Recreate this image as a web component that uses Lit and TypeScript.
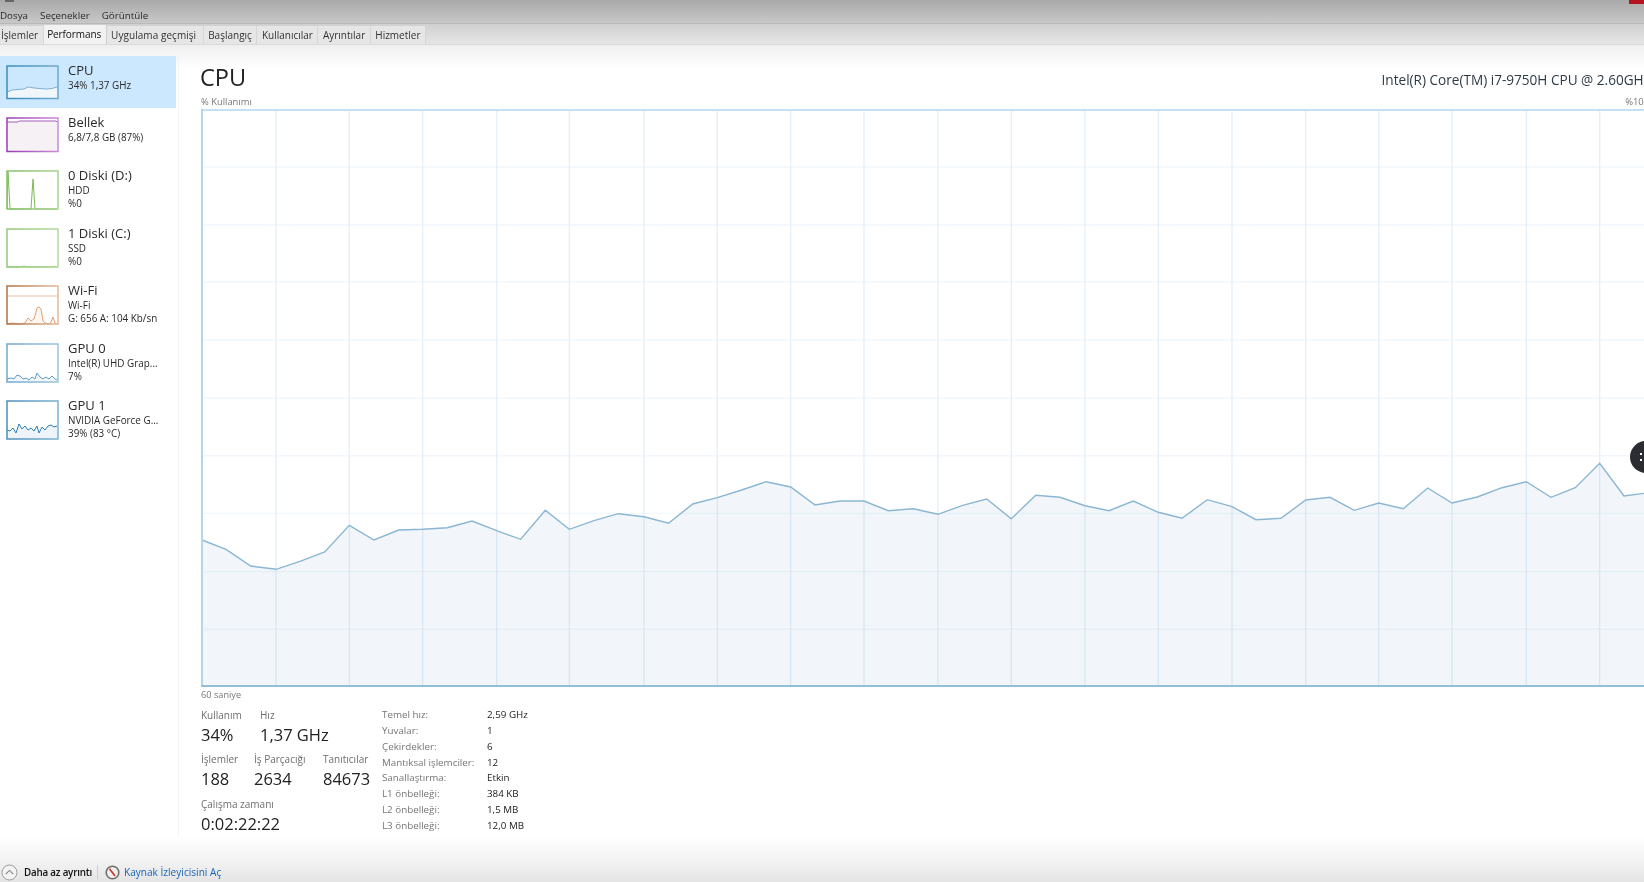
import { LitElement, html, css, svg } from "lit";
import { customElement } from "lit/decorators.js";

const CHART = "202,540 226,549.3 250.7,566 276,569.3 300,561.3 324.7,552 349.3,525.3 374,540 398.7,530 422.7,529.3 447.3,527.7 472,521 496.7,530.7 520.7,539.3 545.3,510.3 569.3,529.3 594,520.7 618.3,513.7 644,516.7 668.5,523.3 692.7,504 717.3,497.7 741.7,490 766,481.7 790.7,487 815,505 840,501 864,501 888.3,510.7 913.3,508.7 938,514.3 962.7,505.3 986.7,499 1011.3,518.7 1035.7,495.3 1060,497.3 1085,505.7 1109,510.7 1133.3,501 1158.3,512.3 1182,518.3 1207.3,499.7 1232,506.7 1256,519.7 1281,518.3 1305.7,500 1330,497.3 1354.3,510.3 1378.7,503 1403.3,508.7 1427.7,488 1452,503 1477.3,497 1502,487.7 1526.3,481.7 1551,497.3 1575.3,487.7 1599.7,463.3 1624,496 1650,492.6";

const VX = [276, 349.3, 422.7, 496.7, 569.3, 644, 717.3, 790.7, 864, 938, 1011.3, 1085, 1158.3, 1232, 1305.7, 1378.7, 1452, 1526.3, 1599.7];
const HY = [167, 224.7, 282, 340, 398, 455.7, 513.4, 571.6, 629.3];

interface Thumb {
  title: string;
  lines: string[];
  color: string;
  soft: string;
  fill: string;
  line: string;
  h: number;
  pts: string;
  extra?: string;
}

const ITEMS: Thumb[] = [
  { title: "CPU", lines: ["34% 1,37 GHz"], color: "#3a8dbb", soft: "#6fa9cc", fill: "#f1f6fb", line: "#7fb0d0", h: 34.5,
    pts: "1,27 6,25 12,24.5 18,24 22,22 28,23 34,23.5 40,24 46,23.5 51,22" },
  { title: "Bellek", lines: ["6,8/7,8 GB (87%)"], color: "#9a3db5", soft: "#c98ad8", fill: "#f5f1f5", line: "#a45cbd", h: 35.5,
    pts: "1,5 12,5 13,4 50,4 51,5" },
  { title: "0 Diski (D:)", lines: ["HDD", "%0"], color: "#86c06a", soft: "#a9d38f", fill: "#ffffff", line: "#7dba58", h: 40,
    pts: "1,39 2,2 4,39 25,39 27,9 29,39 51,39" },
  { title: "1 Diski (C:)", lines: ["SSD", "%0"], color: "#93c977", soft: "#b3da9b", fill: "#ffffff", line: "#8cc56c", h: 40,
    pts: "1,39 16,39 18,38 21,39 36,39 37,38.2 39,39 47,39 48,38.2 51,39" },
  { title: "Wi-Fi", lines: ["Wi-Fi", "G: 656 A: 104 Kb/sn"], color: "#ad7145", soft: "#e4b99a", fill: "#fdf7f2", line: "#e0a27a", h: 40,
    pts: "1,39 6,38 14,39 19,38 22,33 25,36 28,34 31,23 33,22 35,24 37,36 39,38 44,39 47,32 49,38 51,39",
    extra: "1,11 51,11" },
  { title: "GPU 0", lines: ["Intel(R) UHD Grap...", "7%"], color: "#6fa9cc", soft: "#9cc4dc", fill: "#f3f7fb", line: "#5d9cc4", h: 40,
    pts: "1,36 5,35 8,36 11,32 14,33 17,36 20,35 23,37 26,34 29,36 31,30 34,34 37,36 40,34 43,36 46,33 49,36 51,37" },
  { title: "GPU 1", lines: ["NVIDIA GeForce G...", "39% (83 °C)"], color: "#4a8fba", soft: "#7cb0d0", fill: "#eef4fa", line: "#2f80b5", h: 40,
    pts: "1,30 4,31 7,28 10,33 13,24 16,29 19,26 22,30 25,28 28,31 31,26 33,33 36,27 39,30 42,26 45,25 48,27 51,26" },
];

@customElement("app-root")
export class AppRoot extends LitElement {
  static styles = css`
    :host {
      display: block;
      width: 1644px;
      height: 882px;
      overflow: hidden;
      background: #fff;
      font-family: "Open Sans", "Noto Sans", sans-serif;
      color: #222;
      position: relative;
    }
    .app {
      display: flex;
      flex-direction: column;
      height: 882px;
      filter: blur(0.45px);
    }
    .top {
      height: 23px;
      background: linear-gradient(#a9a9a9, #c8c8c8);
      border-bottom: 1px solid #b9b9b9;
      flex: none;
      overflow: hidden;
    }
    .titlebar {
      height: 7px;
      overflow: hidden;
      display: flex;
      align-items: flex-end;
      gap: 5px;
      padding-left: 5px;
      font-size: 11px;
      color: #444;
    }
    .titlebar span {
      line-height: 14px;
      margin-bottom: 5px;
      white-space: nowrap;
    }
    .titlebar i {
      width: 9px;
      height: 9px;
      background: #666;
      margin-bottom: 5px;
      flex: none;
    }
    .menu {
      display: flex;
      height: 16px;
      align-items: center;
      font-size: 9.8px;
      color: #2a2a2a;
      gap: 12px;
    }
    .tabs {
      height: 21px;
      box-sizing: border-box;
      flex: none;
      display: flex;
      align-items: flex-end;
      background: linear-gradient(#d0d0d0, #e6e6e6);
      border-bottom: 1px solid #dadada;
      font-size: 10px;
    }
    .tab {
      height: 18px;
      box-sizing: border-box;
      padding: 0 4.5px;
      display: flex;
      align-items: center;
      white-space: nowrap;
      color: #333;
      background: #e6e6e6;
      border-right: 1px solid #d6d6d6;
    }
    .tab.first {
      padding-left: 1px;
    }
    .tab.on {
      height: 20px;
      padding: 0 4.5px 2px 3.5px;
      letter-spacing: -0.1px;
      background: #f2f2f2;
      border-top: 1px solid #cfcfcf;
      border-right: 1px solid #cfcfcf;
      color: #111;
    }
    .tab.wide {
      padding-right: 6.5px;
      letter-spacing: 0.05px;
    }
    .main {
      flex: 1;
      min-height: 0;
      display: flex;
      background: linear-gradient(#efefef 0, #ffffff 24px);
    }
    .side {
      width: 178px;
      flex: none;
      box-sizing: border-box;
      padding-top: 11px;
      display: flex;
      flex-direction: column;
    }
    .item {
      height: 57.5px;
      width: 176px;
      box-sizing: border-box;
      flex: none;
      display: flex;
      align-items: flex-start;
      padding: 10px 0 0 6px;
      gap: 9px;
    }
    .item.two {
      height: 52px;
      padding-top: 9px;
    }
    .item.sel {
      background: #cce8ff;
    }
    .item svg {
      flex: none;
      display: block;
    }
    .txt {
      margin-top: -4px;
      min-width: 0;
    }
    .t1 {
      font-size: 13px;
      line-height: 18px;
      color: #2a2a2a;
      white-space: nowrap;
    }
    .t2 {
      font-size: 9.9px;
      line-height: 13px;
      color: #2a2a2a;
      white-space: nowrap;
    }
    .content {
      flex: 1;
      min-width: 0;
      overflow: hidden;
      border-left: 1px solid #f3f3f3;
      padding: 15px 0 0 21px;
    }
    .head {
      width: 1450px;
      height: 34px;
      display: flex;
      justify-content: space-between;
      align-items: center;
    }
    .head h1 {
      margin: 0;
      font-weight: 400;
      font-size: 23.5px;
      color: #222;
    }
    .head .model {
      font-size: 13.6px;
      padding-top: 5px;
      white-space: nowrap;
      color: #2d3b47;
    }
    .sub {
      width: 1448px;
      height: 14px;
      display: flex;
      justify-content: space-between;
      align-items: center;
      font-size: 9.4px;
      color: #777;
      padding-left: 1px;
    }
    .chart {
      display: block;
      margin-left: 1px;
    }
    .sixty {
      font-size: 9.2px;
      line-height: 13px;
      color: #777;
      padding-left: 1px;
    }
    .stats {
      display: flex;
      padding: 7px 0 0 1px;
    }
    .left {
      width: 181px;
      flex: none;
    }
    .group {
      display: grid;
      margin-bottom: 4.4px;
    }
    .g1 {
      grid-template-columns: 59px auto;
    }
    .g2 {
      grid-template-columns: 53px 69px auto;
    }
    .lab {
      font-size: 10px;
      line-height: 14px;
      color: #6e6e6e;
      white-space: nowrap;
    }
    .val {
      font-size: 16.5px;
      line-height: 26px;
      color: #222;
      white-space: nowrap;
    }
    .spec {
      margin-top: -1px;
      display: grid;
      grid-template-columns: 105px auto;
      grid-auto-rows: 15.75px;
      align-items: center;
      font-size: 9.8px;
      white-space: nowrap;
    }
    .spec .k {
      color: #757575;
    }
    .spec .v {
      color: #222;
    }
    .foot {
      flex: none;
      box-sizing: border-box;
      display: flex;
      align-items: center;
      padding: 26px 0 0 1px;
      font-size: 9.8px;
      height: 46px;
      margin-top: -12px;
      background: linear-gradient(#ffffff 0, #f4f4f4 50%, #e4e4e4);
    }
    .foot .more {
      color: #111;
      margin-left: 6px;
      font-weight: 600;
      letter-spacing: -0.2px;
    }
    .foot .sep {
      width: 1px;
      height: 14px;
      background: #cfcfcf;
      margin: 0 7px 0 5px;
    }
    .foot .link {
      color: #1463b8;
      margin-left: 4px;
      font-size: 10.1px;
    }
    .foot svg {
      flex: none;
      display: block;
    }
    .red {
      position: absolute;
      right: 0;
      top: 0;
      width: 15px;
      height: 4px;
      background: #b3121f;
    }
    .fab {
      position: absolute;
      left: 1630px;
      top: 441px;
      width: 32px;
      height: 32px;
      border-radius: 50%;
      background: #2c2d33;
    }
    .fab::after {
      content: "";
      position: absolute;
      left: 10px;
      top: 12px;
      width: 2px;
      height: 2px;
      background: #fff;
      box-shadow: 0 6px 0 #fff;
    }
  `;

  private thumb(t: Thumb) {
    const bottom = t.h - 1;
    const id = "g" + t.title.replace(/\W/g, "");
    return html`<svg width="53" height=${t.h} viewBox="0 0 53 ${t.h}">
      <defs>
        <linearGradient id=${id}>
          <stop offset="0" stop-color=${t.color}></stop>
          <stop offset="1" stop-color=${t.soft}></stop>
        </linearGradient>
      </defs>
      <polygon points="1,${bottom} ${t.pts} 52,${bottom}" fill=${t.fill}></polygon>
      ${t.extra ? svg`<polyline points=${t.extra} fill="none" stroke=${t.soft} stroke-width="1.4" opacity="0.6"></polyline>` : ""}
      <polyline points=${t.pts} fill="none" stroke=${t.line} stroke-width="1"></polyline>
      <rect x="1" y="1" width="51" height=${t.h - 2} fill="none" stroke="url(#${id})" stroke-width="1.5"></rect>
    </svg>`;
  }

  private chart() {
    const pts = CHART;
    return html`<svg class="chart" width="1449" height="580" viewBox="201 108 1449 580">
      ${HY.map((y) => svg`<line x1="202" x2="1650" y1=${y} y2=${y} stroke="#f1f7fc" stroke-width="1.4"></line>`)}
      ${VX.map((x) => svg`<line x1=${x} x2=${x} y1="110" y2="686" stroke="#e3eef7" stroke-width="1.2"></line>`)}
      <polygon points="202,686 ${pts} 1650,686" fill="#1b66aa" fill-opacity="0.06"></polygon>
      <polyline points=${pts} fill="none" stroke="#8ab6d3" stroke-width="1.4"></polyline>
      <line x1="201" x2="1650" y1="110" y2="110" stroke="#c6e0f2" stroke-width="2"></line>
      <line x1="202" x2="202" y1="109" y2="687" stroke="#b4d5ec" stroke-width="2"></line>
      <line x1="201" x2="1650" y1="686" y2="686" stroke="#93bed9" stroke-width="2"></line>
    </svg>`;
  }

  render() {
    const specs = [
      ["Temel hız:", "2,59 GHz"],
      ["Yuvalar:", "1"],
      ["Çekirdekler:", "6"],
      ["Mantıksal işlemciler:", "12"],
      ["Sanallaştırma:", "Etkin"],
      ["L1 önbelleği:", "384 KB"],
      ["L2 önbelleği:", "1,5 MB"],
      ["L3 önbelleği:", "12,0 MB"],
    ];
    return html`<div class="app">
        <div class="top">
          <div class="titlebar"><i></i><span>Görev Yöneticisi</span></div>
          <div class="menu"><span>Dosya</span><span>Seçenekler</span><span>Görüntüle</span></div>
        </div>
        <div class="tabs">
          <div class="tab first">İşlemler</div>
          <div class="tab on">Performans</div>
          <div class="tab wide">Uygulama geçmişi</div>
          <div class="tab">Başlangıç</div>
          <div class="tab">Kullanıcılar</div>
          <div class="tab">Ayrıntılar</div>
          <div class="tab">Hizmetler</div>
        </div>
        <div class="main">
          <div class="side">
            ${ITEMS.map(
              (t, i) => html`<div class="item ${i < 2 ? "two" : ""} ${i === 0 ? "sel" : ""}">
                ${this.thumb(t)}
                <div class="txt">
                  <div class="t1">${t.title}</div>
                  ${t.lines.map((l) => html`<div class="t2">${l}</div>`)}
                </div>
              </div>`
            )}
          </div>
          <div class="content">
            <div class="head"><h1>CPU</h1><div class="model">Intel(R) Core(TM) i7-9750H CPU @ 2.60GHz</div></div>
            <div class="sub"><span>% Kullanımı</span><span>%100</span></div>
            ${this.chart()}
            <div class="sixty">60 saniye</div>
            <div class="stats">
              <div class="left">
                <div class="group g1">
                  <div class="lab">Kullanım</div><div class="lab">Hız</div>
                  <div class="val">34%</div><div class="val">1,37 GHz</div>
                </div>
                <div class="group g2">
                  <div class="lab">İşlemler</div><div class="lab">İş Parçacığı</div><div class="lab">Tanıtıcılar</div>
                  <div class="val">188</div><div class="val">2634</div><div class="val">84673</div>
                </div>
                <div class="group">
                  <div class="lab">Çalışma zamanı</div>
                  <div class="val">0:02:22:22</div>
                </div>
              </div>
              <div class="spec">
                ${specs.map((s) => html`<div class="k">${s[0]}</div><div class="v">${s[1]}</div>`)}
              </div>
            </div>
          </div>
        </div>
        <div class="foot">
          <svg width="17" height="17" viewBox="0 0 17 17">
            <circle cx="8.5" cy="8.5" r="7.5" fill="#f4f4f4" stroke="#9a9a9a" stroke-width="1"></circle>
            <path d="M4.8 10 L8.5 6.4 L12.2 10" fill="none" stroke="#8a8a8a" stroke-width="1.1"></path>
          </svg>
          <span class="more">Daha az ayrıntı</span>
          <span class="sep"></span>
          <svg width="15" height="15" viewBox="0 0 15 15">
            <circle cx="7.5" cy="7.5" r="6.3" fill="#f2eeee" stroke="#6f6f6f" stroke-width="1.6"></circle>
            <path d="M4.5 3.8 L10 11" stroke="#c0392b" stroke-width="1.6"></path>
          </svg>
          <span class="link">Kaynak İzleyicisini Aç</span>
        </div>
      </div>
      <div class="red"></div>
      <div class="fab"></div>`;
  }
}
